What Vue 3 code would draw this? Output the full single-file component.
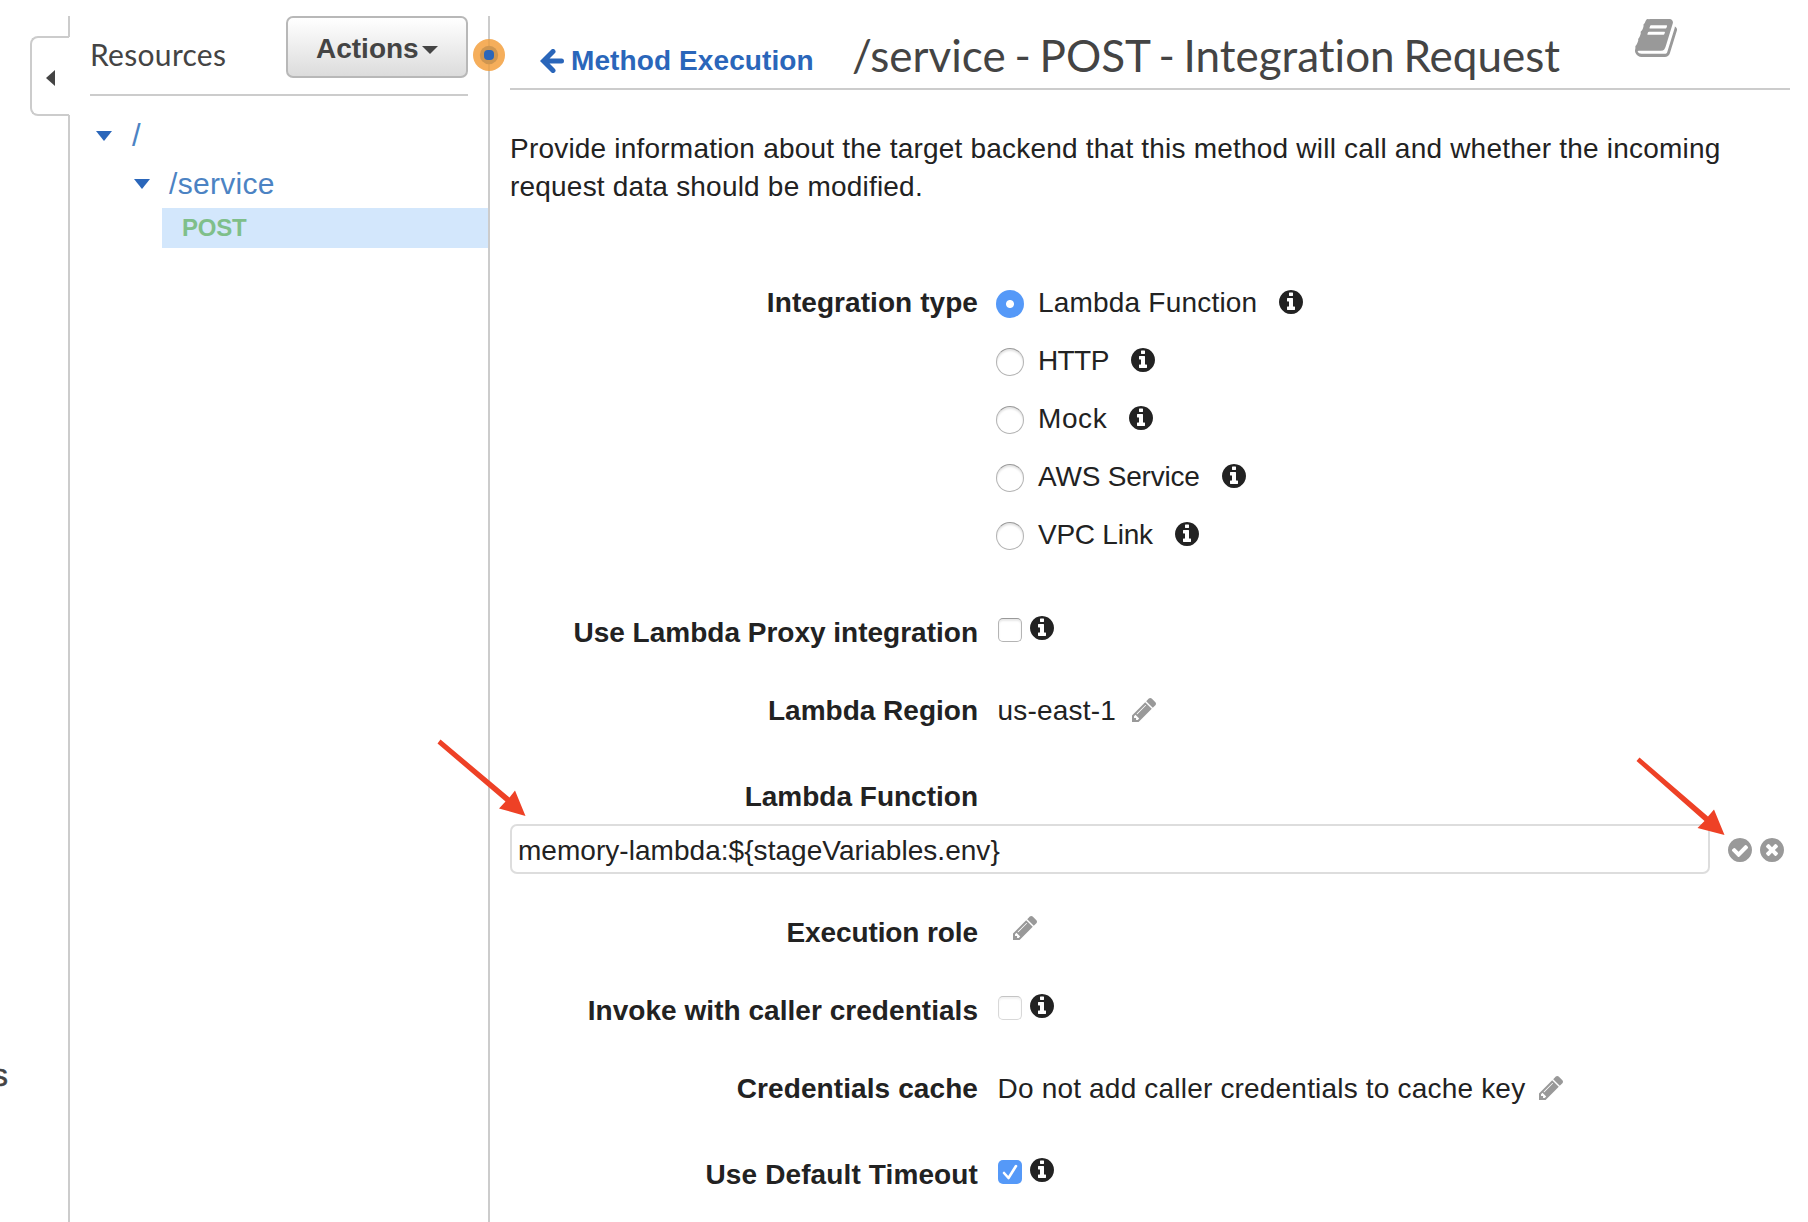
<script setup>
import { h } from 'vue'

const types = [
  { label: 'Lambda Function', on: true, ls: 0.2 },
  { label: 'HTTP', ls: -0.6 },
  { label: 'Mock', ls: 0.6 },
  { label: 'AWS Service', ls: -0.2 },
  { label: 'VPC Link', ls: -0.25 },
]

// 1536-unit glyph grid, y axis down
const glyphs = {
  info: 'M1024 1248v-160q0-14-9-23t-23-9h-96V544q0-14-9-23t-23-9H544q-14 0-23 9t-9 23v160q0 14 9 23t23 9h96v320h-96q-14 0-23 9t-9 23v160q0 14 9 23t23 9h448q14 0 23-9t9-23zM896 352V192q0-14-9-23t-23-9H672q-14 0-23 9t-9 23v160q0 14 9 23t23 9h192q14 0 23-9t9-23zM1536 768q0 209-103 385.500T1153.500 1433 768 1536t-385.500-103T103 1153.500 0 768t103-385.500T382.500 103 768 0t385.500 103T1433 382.500 1536 768z',
  check: 'M1284 606q0-28-18-46l-91-90q-19-19-45-19t-45 19L677 877 451 651q-19-19-45-19t-45 19l-91 90q-18 18-18 46 0 27 18 45l362 362q19 19 45 19 27 0 46-19l543-543q18-18 18-45zM1536 768q0 209-103 385.500T1153.500 1433 768 1536t-385.500-103T103 1153.500 0 768t103-385.500T382.500 103 768 0t385.500 103T1433 382.500 1536 768z',
  cross: 'M1149 994q0-26-19-45L949 768l181-181q19-19 19-45 0-27-19-46l-90-90q-19-19-46-19-26 0-45 19L768 587 587 406q-19-19-45-19-27 0-46 19l-90 90q-19 19-19 46 0 26 19 45l181 181-181 181q-19 19-19 45 0 27 19 46l90 90q19 19 46 19 26 0 45-19l181-181 181 181q19 19 45 19 27 0 46-19l90-90q19-19 19-46zM1536 768q0 209-103 385.500T1153.500 1433 768 1536t-385.500-103T103 1153.500 0 768t103-385.500T382.500 103 768 0t385.500 103T1433 382.500 1536 768z',
  pencil: 'M363 1536l91-91-235-235-91 91v107h128v128h107zM886 608q0-22-22-22-10 0-17 7l-542 542q-7 7-7 17 0 22 22 22 10 0 17-7l542-542q7-7 7-17zM832 416l416 416-832 832H0v-416zM1515 512q0 53-37 90l-166 166-416-416 166-165q36-38 90-38 53 0 91 38l235 234q37 39 37 91z',
}
const Glyph = (p) =>
  h('svg', { viewBox: p.name === 'pencil' ? '0 149 1515 1515' : '0 0 1536 1536', width: 24, height: 24 },
    [h('path', { d: glyphs[p.name], fill: 'currentColor', 'fill-rule': 'evenodd' })])
Glyph.props = ['name']
</script>

<template>
  <div class="page">
    <div class="rail">
      <div class="rail-top"></div>
      <div class="tab"><i class="tri-left"></i></div>
      <div class="rail-rest"><span class="cut">s</span></div>
    </div>

    <aside class="side">
      <div class="side-head">
        <h2>Resources</h2>
        <button class="actions"><span>Actions</span><i class="tri"></i></button>
      </div>
      <div class="node root"><i class="tri"></i><span>/</span></div>
      <div class="node child"><i class="tri"></i><span>/service</span></div>
      <div class="post"><span>POST</span></div>
      <svg class="handle" width="34" height="34" viewBox="0 0 34 34">
        <circle cx="17" cy="17" r="16" fill="#f5ae5b" />
        <path d="M16 1h2v32h-2z" fill="#e9a655" />
        <circle cx="17" cy="17" r="9.200" fill="#cf9650" />
        <rect x="12" y="12" width="10" height="10" rx="4" fill="#2a66ba" />
      </svg>
    </aside>

    <main class="main">
      <header class="head">
        <a class="back">
          <svg width="24" height="24" viewBox="0 0 24 24"><path d="M13 2.500 3.500 12 13 21.500M4.500 12H21.500" fill="none" stroke="#2a66ba" stroke-width="5" stroke-linecap="round" stroke-linejoin="miter" /></svg>
          <span>Method Execution</span>
        </a>
        <h1>/service - POST - Integration Request</h1>
        <svg class="book" width="42" height="38" viewBox="0 0 1664 1536" preserveAspectRatio="none"><path fill="#999" d="M1639 350q40 57 18 129l-275 906q-19 64-76.500 107.500T1183 1536H260q-77 0-148.500-53.500T12 1351q-24-67-2-127 0-4 3-27t4-37q1-8-3-21.500t-3-19.500q2-11 8-21t16.500-23.500T52 1051q23-38 45-91.500t30-91.500q3-10 .5-30t-.5-28q3-11 17-28t17-23q21-36 42-92t25-90q1-9-2.500-32t.5-28q4-13 22-30.500t22-22.500q19-26 42.500-84.500T340 283q1-8-3-25.500t-2-26.500q2-8 9-18t18-23 17-21q8-12 16.500-30.500t15-35 16-36 19.500-32T469.500 12t36-11.500T553 6l-1 3q38-9 51-9h761q74 0 114 56t18 130l-274 906q-36 119-71.500 153.500T1022 1280H153q-27 0-38 15-11 16-1 43 24 70 144 70h923q29 0 56-15.500t35-41.500l300-987q7-22 5-57 38 15 59 43zM575 352q-4 13 2 22.500t20 9.500h608q13 0 25.500-9.500T1247 352l21-64q4-13-2-22.500t-20-9.500H638q-13 0-25.500 9.500T596 288zM492 608q-4 13 2 22.500t20 9.500h608q13 0 25.500-9.500T1164 608l21-64q4-13-2-22.500t-20-9.500H555q-13 0-25.500 9.500T513 544z" /></svg>
      </header>

      <p class="intro">
        <span>Provide information about the target backend that this method will call and whether the incoming</span><br />
        <span>request data should be modified.</span>
      </p>

      <form class="form">
        <div class="row types">
          <label><span>Integration type</span></label>
          <div class="options">
            <div v-for="t in types" :key="t.label" class="option">
              <i class="radio" :class="{ on: t.on }"></i>
              <span :style="{ letterSpacing: t.ls + 'px' }">{{ t.label }}</span>
              <Glyph name="info" class="g" />
            </div>
          </div>
        </div>
        <div class="row proxy">
          <label><span>Use Lambda Proxy integration</span></label>
          <div class="val"><i class="box"></i><Glyph name="info" class="g up" /></div>
        </div>
        <div class="row region">
          <label><span>Lambda Region</span></label>
          <div class="val"><span>us-east-1</span><Glyph name="pencil" class="g pen" /></div>
        </div>
        <div class="row fn"><label><span>Lambda Function</span></label></div>
        <div class="edit">
          <div class="input"><span>memory-lambda:${stageVariables.env}</span></div>
          <Glyph name="check" class="g grey" />
          <Glyph name="cross" class="g grey x" />
        </div>
        <div class="row role">
          <label><span>Execution role</span></label>
          <div class="val"><Glyph name="pencil" class="g pen alone" /></div>
        </div>
        <div class="row invoke">
          <label><span>Invoke with caller credentials</span></label>
          <div class="val"><i class="box dim"></i><Glyph name="info" class="g up" /></div>
        </div>
        <div class="row cache">
          <label><span>Credentials cache</span></label>
          <div class="val"><span>Do not add caller credentials to cache key</span><Glyph name="pencil" class="g pen" /></div>
        </div>
        <div class="row timeout">
          <label><span>Use Default Timeout</span></label>
          <div class="val">
            <i class="box on"><svg width="24" height="24" viewBox="0 0 24 24"><path d="M6 13l4.500 5L18 6" fill="none" stroke="#fff" stroke-width="2.600" stroke-linecap="round" stroke-linejoin="round" /></svg></i>
            <Glyph name="info" class="g up" />
          </div>
        </div>
      </form>
    </main>

    <svg class="pointers" width="1808" height="1222" viewBox="0 0 1808 1222" fill="#ee4126">
      <path d="M437.500 743.500 440.500 739.500 509.500 797.500 515 790.500 525.500 816 499 808.500 505.500 801.500Z" />
      <path d="M1636.500 761 1639.500 757.500 1708 816.500 1714 809.500 1724.500 835 1697.500 828 1704.500 821Z" />
    </svg>
  </div>
</template>

<style>
html, body { margin: 0; background: #fff; overflow: hidden; }
</style>

<style scoped>
.page { position: relative; display: flex; width: 1808px; height: 1222px; overflow: hidden; background: #fff; color: #222; font: 28px/38px "Liberation Sans", Arial, sans-serif; }
.page * { box-sizing: border-box; }
span { white-space: nowrap; }
h1, h2, p { margin: 0; font-weight: 400; }
svg { display: block; flex: none; }
.rail { width: 70px; padding-top: 16px; display: flex; flex-direction: column; }
.rail-top { height: 21px; border-right: 2px solid #ccc; }
.tab { height: 80px; margin: -1px 0 -1px 30px; border: 2px solid #ccc; border-right: 0; border-radius: 8px 0 0 8px; width: 39px; padding: 32px 0 0 14px; }
.tri-left { display: block; width: 0; border: 8px solid transparent; border-left: 0; border-right: 9px solid #444; }
.rail-rest { flex: 1; border-right: 2px solid #ccc; padding-top: 941px; }
.cut { display: block; margin-left: -8px; font-size: 32px; color: #444; -webkit-text-stroke: 0.5px #444; }
.side { position: relative; width: 420px; padding: 16px 0 0 20px; background: linear-gradient(#ccc, #ccc) right 0 top 16px / 2px 100% no-repeat; }
.side-head { display: flex; justify-content: space-between; width: 378px; height: 80px; border-bottom: 2px solid #ccc; }
h2 { font: 30px/36px Lato, sans-serif; color: #444; margin-top: 20px; letter-spacing: 0.3px; }
.actions { display: flex; align-items: flex-start; width: 182px; height: 62px; border: 2px solid #b8b8b8; border-radius: 7px; background: linear-gradient(#fff, #dcdcdc); color: #444; font: bold 28px/32px "Liberation Sans", sans-serif; padding: 15px 0 0 28px; }
.tri { display: block; flex: none; width: 0; border: 8px solid transparent; border-bottom: 0; border-top-color: currentColor; }
.actions .tri { margin: 13px 0 0 3px; }
.node { display: flex; color: #4c83c3; font-size: 30px; }
.node .tri { color: #2a66ba; border-top-width: 10px; }
.root { padding: 21px 0 0 6px; height: 59px; }
.root .tri { margin: 14px 20px 0 0; }
.root span { font-size: 31px; }
.child { padding: 10px 0 0 44px; height: 53px; letter-spacing: 0.3px; }
.child .tri { margin: 14px 19px 0 0; }
.post { height: 40px; margin: 0 2px 0 72px; padding: 1px 0 0 20px; background: #d3e7fc; color: #7fbf8a; font-weight: bold; font-size: 24px; letter-spacing: -0.2px; }
.handle { position: absolute; left: 402px; top: 38px; }
.main { width: 1318px; padding-left: 20px; }
.head { display: flex; width: 1280px; height: 90px; border-bottom: 2px solid #ccc; }
.back { display: flex; color: #2a66ba; font-weight: bold; padding-left: 30px; width: 342px; letter-spacing: 0.1px; }
.back svg { margin: 49px 7px 0 0; }
.back span { margin-top: 42px; }
h1 { font: 44px/52px Lato, sans-serif; color: #444; margin-top: 29px; white-space: nowrap; word-spacing: -2.500px; font-variant-ligatures: none; }
.book { margin: 19px 113px 0 auto; }
.intro { height: 182px; padding-top: 40px; letter-spacing: 0.206px; }
.row { display: flex; height: 38px; }
label { width: 468px; margin-right: 19px; text-align: right; font-weight: bold; flex: none; }
.types { height: 330px; margin-top: 12px; }
.types label { letter-spacing: 0.07px; }
.invoke label { letter-spacing: 0.04px; }
.cache label { letter-spacing: 0.09px; }
.timeout label { letter-spacing: 0.12px; }
.role label { letter-spacing: -0.1px; }
.options { margin-left: -1px; }
.option { display: flex; height: 58px; }
.radio { width: 28px; height: 28px; margin: 6px 14px 0 0; border-radius: 50%; border: 1px solid #b4b4b4; border-top-color: #999; box-shadow: inset 0 2px 2px #e4e4e4; }
.radio.on { border: 0; background: radial-gradient(circle, #fff 3.500px, #5599f8 4.500px); box-shadow: none; }
.option .g { margin: 6px 0 0 22px; }
.val { display: flex; letter-spacing: 0.19px; }
.val span { margin-left: 0.5px; }
.box { width: 24px; height: 24px; margin-top: 4px; border: 1px solid #b4b4b4; border-top-color: #999; border-radius: 5px; box-shadow: inset 0 2px 2px #e8e8e8; margin-left: 1px; }
.box.dim { border-color: #d8d8d8; border-top-color: #c4c4c4; box-shadow: inset 0 2px 2px #f2f2f2; }
.box.on { border: 0; background: #5599f8; box-shadow: none; }
.g.up { margin: 2px 0 0 8px; }
.pen { color: #999; margin: 6px 0 0 16px; }
.cache .pen { margin-left: 14px; }
.pen.alone { margin: 2px 0 0 16px; }
.proxy { height: 78px; }
.region { height: 86px; }
.fn { height: 46px; }
.edit { display: flex; height: 50px; }
.input { width: 1200px; border: 2px solid #ddd; border-radius: 7px; padding: 6px 0 0 6px; letter-spacing: 0.04px; }
.grey { color: #999; margin: 14px 0 0 18px; }
.grey.x { margin-left: 8px; }
.role { margin-top: 40px; height: 78px; }
.invoke { height: 78px; }
.cache { height: 86px; }
.pointers { position: absolute; left: 0; top: 0; pointer-events: none; }
</style>
